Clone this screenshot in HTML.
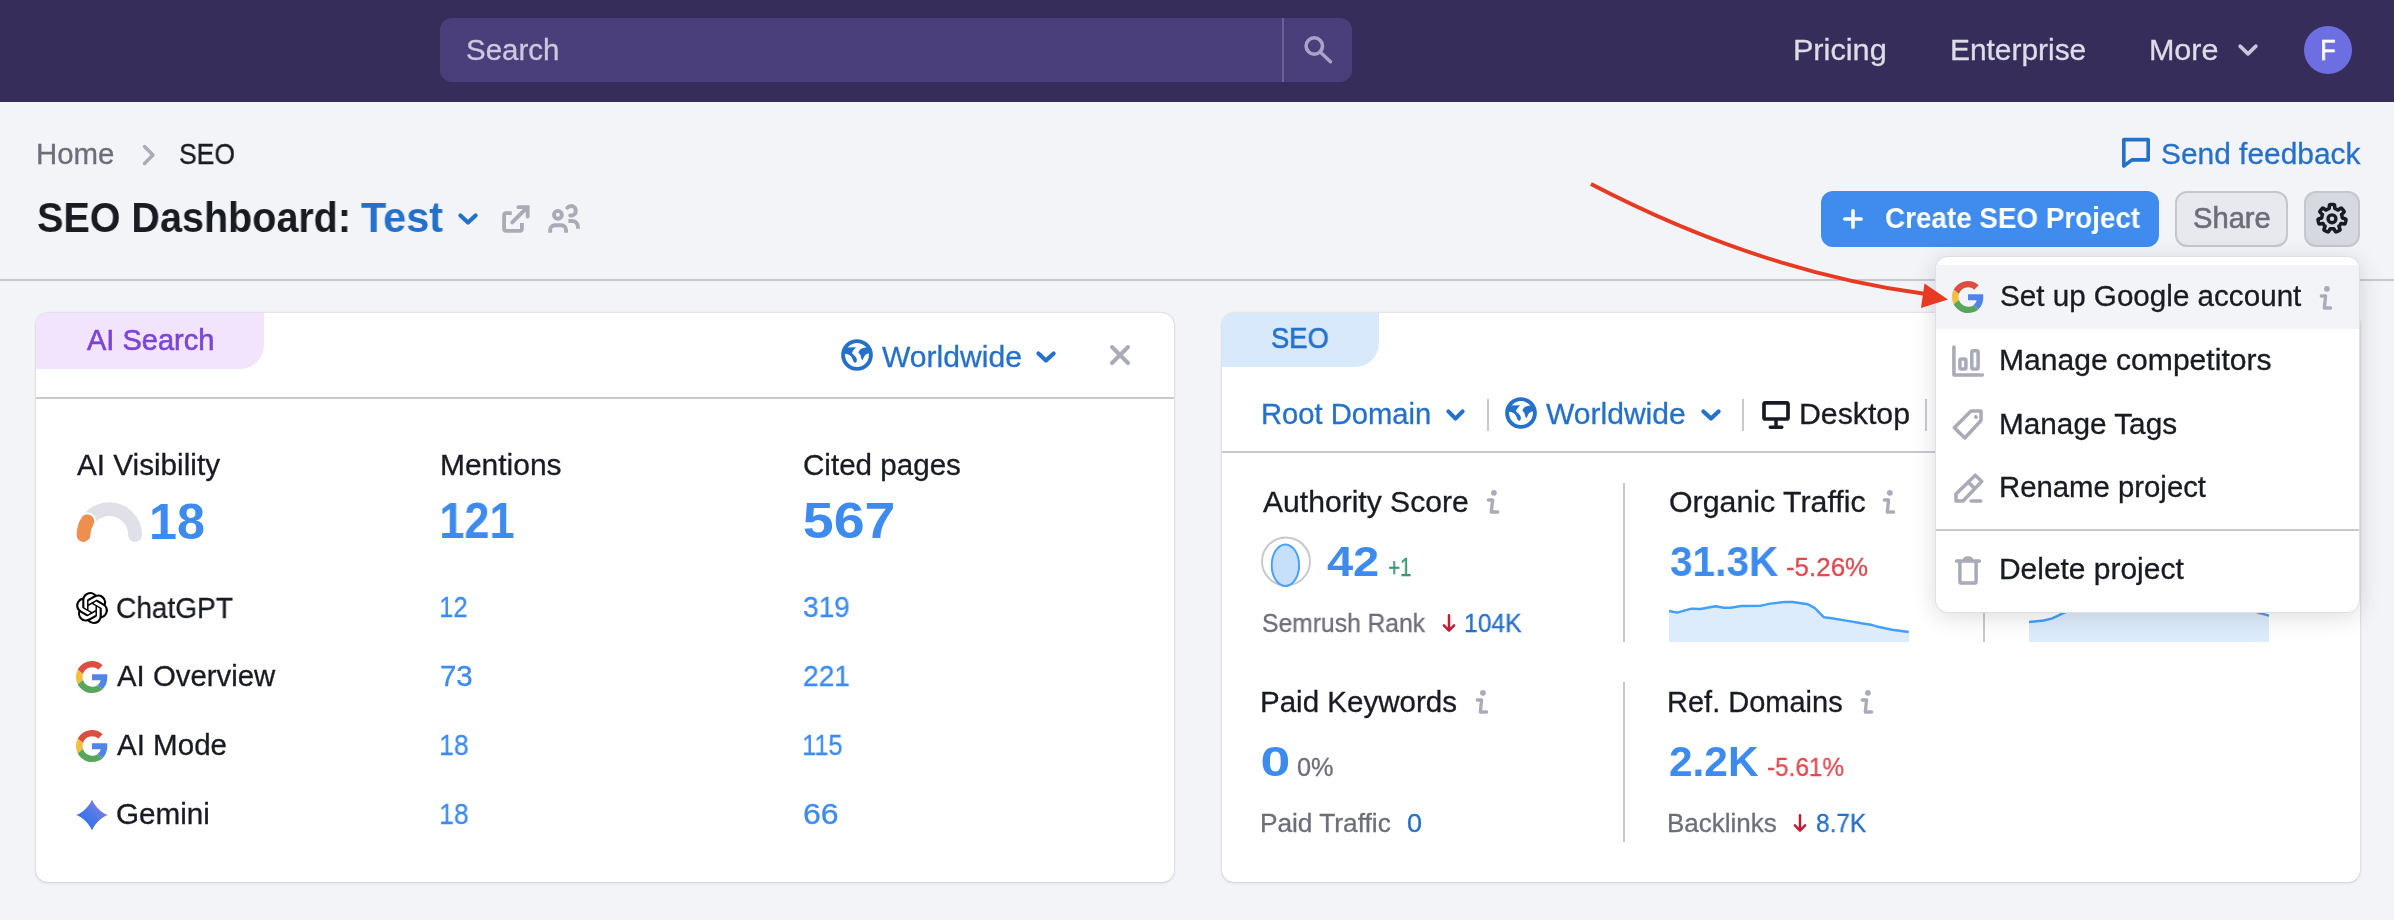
<!DOCTYPE html>
<html><head><meta charset="utf-8"><style>
html,body{margin:0;padding:0}
body{width:2394px;height:920px;overflow:hidden;position:relative;background:#f3f4f8;font-family:'Liberation Sans', sans-serif}
.t{position:absolute;line-height:1;white-space:nowrap;will-change:transform}
.a{position:absolute}
svg{overflow:visible}
</style></head><body>
<!-- header -->
<div class="a" style="left:0;top:0;width:2394px;height:102px;background:#362d5a"></div>
<div class="a" style="left:440px;top:18px;width:912px;height:64px;border-radius:12px;background:#4a3f7b"></div>
<div class="a" style="left:1282px;top:18px;width:2px;height:64px;background:#6a6197"></div>
<svg style="position:absolute;left:1300px;top:32px" width="36" height="36" viewBox="0 0 36 36">
<circle cx="14.3" cy="14" r="8.2" fill="none" stroke="#aaa3c9" stroke-width="3.6"/>
<line x1="20.5" y1="20.2" x2="30.5" y2="29.8" stroke="#aaa3c9" stroke-width="3.4" stroke-linecap="round"/></svg>
<svg style="position:absolute;left:2238px;top:44px" width="20" height="12" viewBox="0 0 20 12"><polyline points="2.1,2.1 10.0,9.899999999999999 17.9,2.1" fill="none" stroke="#c9c6d8" stroke-width="3.6" stroke-linecap="round" stroke-linejoin="round"/></svg>
<div class="a" style="left:2304px;top:26px;width:48px;height:48px;border-radius:50%;background:#6d6ee2"></div>

<!-- breadcrumb -->
<svg style="position:absolute;left:140px;top:142px" width="18" height="26" viewBox="0 0 18 26">
<polyline points="4.5,4.5 13,13 4.5,21.5" fill="none" stroke="#a9abb6" stroke-width="3.4" stroke-linecap="round" stroke-linejoin="round"/></svg>

<!-- feedback icon -->
<svg style="position:absolute;left:2121px;top:137px" width="32" height="32" viewBox="0 0 32 32">
<path d="M2.8 2.6 H27.2 V22.9 H11 L2.8 29 Z" fill="none" stroke="#2570c9" stroke-width="3.6" stroke-linejoin="round"/></svg>

<!-- title icons -->
<svg style="position:absolute;left:458px;top:213px" width="20" height="12" viewBox="0 0 20 12"><polyline points="2.4,2.4 10.0,9.6 17.599999999999998,2.4" fill="none" stroke="#2570c9" stroke-width="4.2" stroke-linecap="round" stroke-linejoin="round"/></svg>
<svg style="position:absolute;left:500px;top:203px" width="32" height="32" viewBox="0 0 32 32">
<path d="M11.8 10.1 H6.2 Q4.1 10.1 4.1 12.2 V25.7 Q4.1 27.8 6.2 27.8 H19.8 Q21.9 27.8 21.9 25.7 V20.1" fill="none" stroke="#a9abb6" stroke-width="3.8"/>
<path d="M12.2 19.4 L26.5 5.1 M18.4 4.2 H27.7 V13.5" fill="none" stroke="#a9abb6" stroke-width="3.8" stroke-linecap="round" stroke-linejoin="miter"/></svg>
<svg style="position:absolute;left:546px;top:203px" width="36" height="32" viewBox="0 0 36 32">
<circle cx="11.9" cy="11.8" r="3.95" fill="none" stroke="#a9abb6" stroke-width="3.9"/>
<path d="M4.15 29.7 V27 C4.15 24.2 6.2 22.25 9 22.25 H15.2 C18 22.25 20.05 24.2 20.05 27 V29.7" fill="none" stroke="#a9abb6" stroke-width="3.9"/>
<path d="M21.3 4.8 C22.3 3.6 23.8 3 25.3 3 C27.8 3 29.8 5.2 29.8 7.9 C29.8 10.5 27.7 12.5 25.2 12.5 H24.2" fill="none" stroke="#a9abb6" stroke-width="3.9" stroke-linecap="round"/>
<path d="M22.4 18 H26 C29.5 18 32 20.8 32 24.3 V25.8" fill="none" stroke="#a9abb6" stroke-width="3.9" stroke-linecap="butt"/></svg>

<!-- buttons -->
<div class="a" style="left:1821px;top:191px;width:338px;height:56px;border-radius:12px;background:#3f8bee"></div>
<svg style="position:absolute;left:1840px;top:206px" width="26" height="26" viewBox="0 0 26 26">
<path d="M13 4.8 V21.2 M4.8 13 H21.2" stroke="#fff" stroke-width="3.6" stroke-linecap="round"/></svg>
<div class="a" style="left:2175px;top:191px;width:109px;height:52px;border-radius:12px;background:#e8e9ee;border:2px solid #c5c6ce"></div>
<div class="a" style="left:2304px;top:191px;width:52px;height:52px;border-radius:12px;background:#d7d9e0;border:2px solid #c5c6ce"></div>
<svg style="position:absolute;left:2316px;top:202px" width="32" height="32" viewBox="0 0 32 32">
<path d="M28.15 16.50 L29.45 16.90 L29.97 17.34 L29.94 17.75 L29.90 18.17 L29.84 18.59 L29.78 19.00 L29.69 19.41 L29.60 19.82 L29.50 20.22 L29.38 20.63 L29.25 21.02 L29.11 21.42 L28.95 21.81 L28.29 21.97 L26.95 21.77 L25.62 21.49 L25.00 21.52 L24.84 21.78 L24.68 22.05 L24.51 22.30 L24.33 22.55 L24.15 22.80 L23.96 23.04 L23.76 23.28 L23.55 23.51 L23.34 23.73 L23.12 23.94 L22.89 24.15 L23.01 24.77 L23.58 26.00 L24.07 27.27 L24.06 27.95 L23.71 28.18 L23.36 28.41 L23.00 28.62 L22.63 28.83 L22.26 29.02 L21.89 29.20 L21.50 29.37 L21.11 29.53 L20.72 29.68 L20.33 29.81 L19.93 29.94 L19.39 29.52 L18.70 28.35 L18.10 27.14 L17.69 26.66 L17.38 26.71 L17.08 26.74 L16.77 26.77 L16.46 26.79 L16.15 26.80 L15.85 26.80 L15.54 26.79 L15.23 26.77 L14.92 26.74 L14.62 26.71 L14.31 26.66 L13.90 27.14 L13.30 28.35 L12.61 29.52 L12.07 29.94 L11.67 29.81 L11.28 29.68 L10.89 29.53 L10.50 29.37 L10.11 29.20 L9.74 29.02 L9.37 28.83 L9.00 28.62 L8.64 28.41 L8.29 28.18 L7.94 27.95 L7.93 27.27 L8.42 26.00 L8.99 24.77 L9.11 24.15 L8.88 23.94 L8.66 23.73 L8.45 23.51 L8.24 23.28 L8.04 23.04 L7.85 22.80 L7.67 22.55 L7.49 22.30 L7.32 22.05 L7.16 21.78 L7.00 21.52 L6.38 21.49 L5.05 21.77 L3.71 21.97 L3.05 21.81 L2.89 21.42 L2.75 21.02 L2.62 20.63 L2.50 20.22 L2.40 19.82 L2.31 19.41 L2.22 19.00 L2.16 18.59 L2.10 18.17 L2.06 17.75 L2.03 17.34 L2.55 16.90 L3.85 16.50 L5.16 16.18 L5.72 15.88 L5.74 15.58 L5.77 15.27 L5.82 14.96 L5.87 14.66 L5.93 14.36 L5.99 14.06 L6.07 13.76 L6.16 13.46 L6.25 13.17 L6.36 12.88 L6.47 12.59 L6.10 12.09 L5.05 11.23 L4.06 10.30 L3.77 9.68 L3.98 9.32 L4.20 8.96 L4.43 8.61 L4.67 8.27 L4.93 7.94 L5.19 7.61 L5.46 7.29 L5.74 6.98 L6.03 6.67 L6.33 6.38 L6.63 6.10 L7.30 6.23 L8.42 7.00 L9.50 7.82 L10.07 8.08 L10.33 7.90 L10.59 7.74 L10.85 7.58 L11.12 7.43 L11.39 7.29 L11.67 7.15 L11.95 7.03 L12.24 6.91 L12.53 6.80 L12.82 6.70 L13.11 6.61 L13.27 6.01 L13.30 4.65 L13.40 3.30 L13.71 2.69 L14.12 2.63 L14.54 2.58 L14.95 2.54 L15.37 2.51 L15.79 2.50 L16.21 2.50 L16.63 2.51 L17.05 2.54 L17.46 2.58 L17.88 2.63 L18.29 2.69 L18.60 3.30 L18.70 4.65 L18.73 6.01 L18.89 6.61 L19.18 6.70 L19.47 6.80 L19.76 6.91 L20.05 7.03 L20.33 7.15 L20.61 7.29 L20.88 7.43 L21.15 7.58 L21.41 7.74 L21.67 7.90 L21.93 8.08 L22.50 7.82 L23.58 7.00 L24.70 6.23 L25.37 6.10 L25.67 6.38 L25.97 6.67 L26.26 6.98 L26.54 7.29 L26.81 7.61 L27.07 7.94 L27.33 8.27 L27.57 8.61 L27.80 8.96 L28.02 9.32 L28.23 9.68 L27.94 10.30 L26.95 11.23 L25.90 12.09 L25.53 12.59 L25.64 12.88 L25.75 13.17 L25.84 13.46 L25.93 13.76 L26.01 14.06 L26.07 14.36 L26.13 14.66 L26.18 14.96 L26.23 15.27 L26.26 15.58 L26.28 15.88 L26.84 16.18 Z" fill="none" stroke="#191b23" stroke-width="3.5" stroke-linejoin="round"/>
<circle cx="16" cy="16.8" r="3.9" fill="none" stroke="#191b23" stroke-width="3.4"/></svg>

<!-- divider line -->
<div class="a" style="left:0;top:279px;width:2394px;height:2px;background:#c8c9d0"></div>

<!-- AI card -->
<div class="a" style="left:36px;top:313px;width:1138px;height:569px;border-radius:12px;background:#fff;box-shadow:0 0 2px rgba(25,27,35,0.28),0 2px 3px rgba(25,27,35,0.06)"></div>
<div class="a" style="left:36px;top:313px;width:228px;height:56px;border-radius:12px 0 24px 0;background:#f2e4fd"></div>
<div class="a" style="left:36px;top:397px;width:1138px;height:2px;background:#c8c9d0"></div>
<svg style="position:absolute;left:841px;top:339px" width="32" height="32" viewBox="0 0 32 32">
<path d="M4 8.6 L15.1 8.3 C13.5 10 11.2 12.5 11 14.3 C12.5 15.8 15.2 17.3 15.8 20.2 C16.2 22.3 15.2 23.8 14.2 23.8 C13.2 23.8 12.6 22.8 12.2 21.8 C11.5 19.8 10.6 17.5 8.7 16.3 C7.5 15.2 5.5 14.8 3.8 14.7 Z" fill="#2570c9"/>
<path d="M17.4 13.4 C18.2 11.5 19.4 10.2 20.8 9.6 C22 9 23.5 8.5 28 8.2 L28.2 14.3 C26.8 14.6 25 15.3 24.2 16.1 C23 17.5 22.2 20.2 21.5 20.9 C20.8 20.9 20.3 19.8 20.1 18.8 C19.9 17.5 19.7 16.5 19.3 15.8 C18.8 15 18 14.3 17.4 13.4 Z" fill="#2570c9"/>
<circle cx="16" cy="16" r="13.9" fill="none" stroke="#2570c9" stroke-width="3.9"/>
</svg>
<svg style="position:absolute;left:1036px;top:351px" width="20" height="12" viewBox="0 0 20 12"><polyline points="2.4,2.4 10.0,9.6 17.599999999999998,2.4" fill="none" stroke="#2570c9" stroke-width="4.2" stroke-linecap="round" stroke-linejoin="round"/></svg>
<svg style="position:absolute;left:1107px;top:342px" width="26" height="26" viewBox="0 0 26 26">
<path d="M5 5 L21 21 M21 5 L5 21" stroke="#a9abb6" stroke-width="4" stroke-linecap="round"/></svg>

<!-- gauge -->
<svg style="position:absolute;left:70px;top:495px" width="80" height="52" viewBox="70 495 80 52">
<path d="M 83.5 535 A 25.8 25.8 0 0 1 135.1 535" fill="none" stroke="#e0e1e8" stroke-width="13.8" stroke-linecap="round"/>
<path d="M 83.5 535 A 25.8 25.8 0 0 1 87.4 521.3" fill="none" stroke="#fff" stroke-width="17.8" stroke-linecap="round"/>
<path d="M 83.5 535 A 25.8 25.8 0 0 1 87.4 521.3" fill="none" stroke="#ef8f4f" stroke-width="13.8" stroke-linecap="round"/>
</svg>

<!-- icons rows -->
<svg style="position:absolute;left:76px;top:592px" width="32" height="32" viewBox="0 0 24 24">
<path fill="#000" d="M22.2819 9.8211a5.9847 5.9847 0 0 0-.5157-4.9108 6.0462 6.0462 0 0 0-6.5098-2.9A6.0651 6.0651 0 0 0 4.9807 4.1818a5.9847 5.9847 0 0 0-3.9977 2.9 6.0462 6.0462 0 0 0 .7427 7.0966 5.98 5.98 0 0 0 .511 4.9107 6.051 6.051 0 0 0 6.5146 2.9001A5.9847 5.9847 0 0 0 13.2599 24a6.0557 6.0557 0 0 0 5.7718-4.2058 5.9894 5.9894 0 0 0 3.9977-2.9001 6.0557 6.0557 0 0 0-.7475-7.0729zm-9.022 12.6081a4.4755 4.4755 0 0 1-2.8764-1.0408l.1419-.0804 4.7783-2.7582a.7948.7948 0 0 0 .3927-.6813v-6.7369l2.02 1.1686a.071.071 0 0 1 .038.052v5.5826a4.504 4.504 0 0 1-4.4945 4.4944zm-9.6607-4.1254a4.4708 4.4708 0 0 1-.5346-3.0137l.142.0852 4.783 2.7582a.7712.7712 0 0 0 .7806 0l5.8428-3.3685v2.3324a.0804.0804 0 0 1-.0332.0615L9.74 19.9502a4.4992 4.4992 0 0 1-6.1408-1.6464zM2.3408 7.8956a4.485 4.485 0 0 1 2.3655-1.9728V11.6a.7664.7664 0 0 0 .3879.6765l5.8144 3.3543-2.0201 1.1685a.0757.0757 0 0 1-.071 0l-4.8303-2.7865A4.504 4.504 0 0 1 2.3408 7.872zm16.5963 3.8558L13.1038 8.364 15.1192 7.2a.0757.0757 0 0 1 .071 0l4.8303 2.7913a4.4944 4.4944 0 0 1-.6765 8.1042v-5.6772a.79.79 0 0 0-.407-.667zm2.0107-3.0231l-.142-.0852-4.7735-2.7818a.7759.7759 0 0 0-.7854 0L9.409 9.2297V6.8974a.0662.0662 0 0 1 .0284-.0615l4.8303-2.7866a4.4992 4.4992 0 0 1 6.6802 4.66zM8.3065 12.863l-2.02-1.1638a.0804.0804 0 0 1-.038-.0567V6.0742a4.4992 4.4992 0 0 1 7.3757-3.4537l-.142.0805L8.704 5.459a.7948.7948 0 0 0-.3927.6813zm1.0976-2.3654l2.602-1.4998 2.6069 1.4998v2.9994l-2.5974 1.4997-2.6067-1.4997Z"/></svg>
<svg style="position:absolute;left:76px;top:661px" width="32" height="32" viewBox="0 0 48 48">
<path fill="#dc4e3f" d="M24 9.5c3.54 0 6.71 1.22 9.21 3.6l6.85-6.85C35.9 2.38 30.47 0 24 0 14.62 0 6.51 5.38 2.56 13.22l7.98 6.19C12.43 13.72 17.74 9.5 24 9.5z"/>
<path fill="#4f84ea" d="M46.98 24.55c0-1.57-.15-3.09-.38-4.55H24v9.02h12.94c-.58 2.96-2.26 5.48-4.78 7.18l7.73 6c4.51-4.18 7.09-10.36 7.09-17.650z"/>
<path fill="#f1c03f" d="M10.53 28.59c-.48-1.45-.76-2.990-.76-4.59s.27-3.14.76-4.59l-7.98-6.19C.92 16.46 0 20.12 0 24c0 3.88.92 7.54 2.56 10.78l7.97-6.19z"/>
<path fill="#58a65c" d="M24 48c6.48 0 11.93-2.13 15.890-5.81l-7.73-6c-2.15 1.45-4.92 2.3-8.16 2.3-6.26 0-11.57-4.22-13.47-9.91l-7.98 6.19C6.51 42.62 14.62 48 24 48z"/>
</svg>
<svg style="position:absolute;left:76px;top:730px" width="32" height="32" viewBox="0 0 48 48">
<path fill="#dc4e3f" d="M24 9.5c3.54 0 6.71 1.22 9.21 3.6l6.85-6.85C35.9 2.38 30.47 0 24 0 14.62 0 6.51 5.38 2.56 13.22l7.98 6.19C12.43 13.72 17.74 9.5 24 9.5z"/>
<path fill="#4f84ea" d="M46.98 24.55c0-1.57-.15-3.09-.38-4.55H24v9.02h12.94c-.58 2.96-2.26 5.48-4.78 7.18l7.73 6c4.51-4.18 7.09-10.36 7.09-17.650z"/>
<path fill="#f1c03f" d="M10.53 28.59c-.48-1.45-.76-2.990-.76-4.59s.27-3.14.76-4.59l-7.98-6.19C.92 16.46 0 20.12 0 24c0 3.88.92 7.54 2.56 10.78l7.97-6.19z"/>
<path fill="#58a65c" d="M24 48c6.48 0 11.93-2.13 15.890-5.81l-7.73-6c-2.15 1.45-4.92 2.3-8.16 2.3-6.26 0-11.57-4.22-13.47-9.91l-7.98 6.19C6.51 42.62 14.62 48 24 48z"/>
</svg>
<svg style="position:absolute;left:76px;top:799px" width="32" height="32" viewBox="0 0 32 32">
<defs><linearGradient id="gm" x1="0" y1="1" x2="1" y2="0"><stop offset="0" stop-color="#1f6cf0"/><stop offset="0.5" stop-color="#4d7ae6"/><stop offset="1" stop-color="#a17ce0"/></linearGradient></defs>
<path d="M16 0.5 C18.5 7 25 13.5 31.8 16 C25 18.5 18.5 25 16 31.5 C13.5 25 7 18.5 0.2 16 C7 13.5 13.5 7 16 0.5 Z" fill="url(#gm)"/></svg>

<!-- SEO card -->
<div class="a" style="left:1222px;top:313px;width:1138px;height:569px;border-radius:12px;background:#fff;box-shadow:0 0 2px rgba(25,27,35,0.28),0 2px 3px rgba(25,27,35,0.06)"></div>
<div class="a" style="left:1222px;top:313px;width:157px;height:54px;border-radius:12px 0 24px 0;background:#d9e9fc"></div>
<div class="a" style="left:1222px;top:451px;width:1138px;height:2px;background:#c8c9d0"></div>
<svg style="position:absolute;left:1446px;top:409px" width="19" height="12" viewBox="0 0 19 12"><polyline points="2.4,2.4 9.5,9.6 16.599999999999998,2.4" fill="none" stroke="#2570c9" stroke-width="4.2" stroke-linecap="round" stroke-linejoin="round"/></svg>
<div class="a" style="left:1487px;top:399px;width:2px;height:32px;background:#c8c9d0"></div>
<svg style="position:absolute;left:1505px;top:397px" width="32" height="32" viewBox="0 0 32 32">
<path d="M4 8.6 L15.1 8.3 C13.5 10 11.2 12.5 11 14.3 C12.5 15.8 15.2 17.3 15.8 20.2 C16.2 22.3 15.2 23.8 14.2 23.8 C13.2 23.8 12.6 22.8 12.2 21.8 C11.5 19.8 10.6 17.5 8.7 16.3 C7.5 15.2 5.5 14.8 3.8 14.7 Z" fill="#2570c9"/>
<path d="M17.4 13.4 C18.2 11.5 19.4 10.2 20.8 9.6 C22 9 23.5 8.5 28 8.2 L28.2 14.3 C26.8 14.6 25 15.3 24.2 16.1 C23 17.5 22.2 20.2 21.5 20.9 C20.8 20.9 20.3 19.8 20.1 18.8 C19.9 17.5 19.7 16.5 19.3 15.8 C18.8 15 18 14.3 17.4 13.4 Z" fill="#2570c9"/>
<circle cx="16" cy="16" r="13.9" fill="none" stroke="#2570c9" stroke-width="3.9"/>
</svg>
<svg style="position:absolute;left:1701px;top:409px" width="20" height="12" viewBox="0 0 20 12"><polyline points="2.4,2.4 10.0,9.6 17.599999999999998,2.4" fill="none" stroke="#2570c9" stroke-width="4.2" stroke-linecap="round" stroke-linejoin="round"/></svg>
<div class="a" style="left:1742px;top:399px;width:2px;height:32px;background:#c8c9d0"></div>
<svg style="position:absolute;left:1752px;top:390px" width="48" height="48" viewBox="0 0 48 48">
<rect x="12" y="12.8" width="24" height="16.2" rx="1.5" fill="none" stroke="#191b23" stroke-width="3.7"/>
<path d="M24 31 V35.5 M18.3 37.2 H29.8" stroke="#191b23" stroke-width="3.5" stroke-linecap="round"/></svg>
<div class="a" style="left:1925px;top:399px;width:2px;height:32px;background:#c8c9d0"></div>

<svg style="position:absolute;left:1480px;top:489px" width="24" height="26" viewBox="0 0 24 26">
<circle cx="13.9" cy="3.8" r="2.9" fill="#a9abb6"/>
<path d="M8.3 11 H12.6 L11.3 23 H17.6" fill="none" stroke="#a9abb6" stroke-width="3.3" stroke-linecap="round" stroke-linejoin="round"/></svg>
<svg style="position:absolute;left:1876px;top:489px" width="24" height="26" viewBox="0 0 24 26">
<circle cx="13.9" cy="3.8" r="2.9" fill="#a9abb6"/>
<path d="M8.3 11 H12.6 L11.3 23 H17.6" fill="none" stroke="#a9abb6" stroke-width="3.3" stroke-linecap="round" stroke-linejoin="round"/></svg>
<svg style="position:absolute;left:1469px;top:689px" width="24" height="26" viewBox="0 0 24 26">
<circle cx="13.9" cy="3.8" r="2.9" fill="#a9abb6"/>
<path d="M8.3 11 H12.6 L11.3 23 H17.6" fill="none" stroke="#a9abb6" stroke-width="3.3" stroke-linecap="round" stroke-linejoin="round"/></svg>
<svg style="position:absolute;left:1854px;top:689px" width="24" height="26" viewBox="0 0 24 26">
<circle cx="13.9" cy="3.8" r="2.9" fill="#a9abb6"/>
<path d="M8.3 11 H12.6 L11.3 23 H17.6" fill="none" stroke="#a9abb6" stroke-width="3.3" stroke-linecap="round" stroke-linejoin="round"/></svg>
<div class="a" style="left:1623px;top:483px;width:2px;height:159px;background:#c8c9d0"></div>
<div class="a" style="left:1983px;top:483px;width:2px;height:159px;background:#c8c9d0"></div>
<div class="a" style="left:1623px;top:682px;width:2px;height:160px;background:#c8c9d0"></div>

<svg style="position:absolute;left:1260px;top:535px" width="54" height="54" viewBox="1260 535 54 54">
<circle cx="1286" cy="561.4" r="24" fill="none" stroke="#c8c9d0" stroke-width="2"/>
<ellipse cx="1285.4" cy="565.2" rx="13.7" ry="20.8" fill="#c6e0fb" stroke="#4aa2f6" stroke-width="2"/></svg>
<svg style="position:absolute;left:1669px;top:596px" width="241" height="47" viewBox="0 0 241 47">
<polygon points="0,46 0.0,15.0 7.9,16.7 22.5,12.7 31.3,13.0 46.5,10.3 54.7,11.7 61.7,11.7 72.2,10.0 92.1,9.7 101.5,7.6 116.7,5.9 123.7,6.0 138.9,8.3 145.9,12.1 154.7,21.2 161.1,22.0 178.7,24.9 193.9,27.5 202.0,28.7 209.0,30.8 223.1,33.7 239.8,36.0 240,46" fill="#ddecfc"/><polyline points="0.0,15.0 7.9,16.7 22.5,12.7 31.3,13.0 46.5,10.3 54.7,11.7 61.7,11.7 72.2,10.0 92.1,9.7 101.5,7.6 116.7,5.9 123.7,6.0 138.9,8.3 145.9,12.1 154.7,21.2 161.1,22.0 178.7,24.9 193.9,27.5 202.0,28.7 209.0,30.8 223.1,33.7 239.8,36.0" fill="none" stroke="#42a0f6" stroke-width="2.4" stroke-linejoin="round" stroke-linecap="butt"/></svg>
<svg style="position:absolute;left:2029px;top:596px" width="241" height="47" viewBox="0 0 241 47">
<polygon points="0,46 0.0,26.0 14.8,24.5 23.3,22.4 35.4,16.7 51.0,10.0 91.0,6.0 151.0,4.0 211.0,10.0 230.7,17.0 240.0,19.6 240,46" fill="#ddecfc"/><polyline points="0.0,26.0 14.8,24.5 23.3,22.4 35.4,16.7 51.0,10.0 91.0,6.0 151.0,4.0 211.0,10.0 230.7,17.0 240.0,19.6" fill="none" stroke="#42a0f6" stroke-width="2.4" stroke-linejoin="round" stroke-linecap="butt"/></svg>

<!-- red arrows small -->
<svg style="position:absolute;left:1440px;top:612px" width="18" height="22" viewBox="0 0 18 22">
<path d="M9 3.2 V18.5 M3.9 13.3 L9 18.6 L14.1 13.3" fill="none" stroke="#c41c35" stroke-width="2.5" stroke-linecap="round" stroke-linejoin="round"/></svg>
<svg style="position:absolute;left:1791px;top:812px" width="18" height="22" viewBox="0 0 18 22">
<path d="M9 3.2 V18.5 M3.9 13.3 L9 18.6 L14.1 13.3" fill="none" stroke="#c41c35" stroke-width="2.5" stroke-linecap="round" stroke-linejoin="round"/></svg>

<!-- dropdown menu -->
<div class="a" style="left:1936px;top:257px;width:423px;height:355px;border-radius:12px;background:#fff;box-shadow:0 0 0 1px #dfe0e6,0 4px 24px rgba(25,27,35,0.16)"></div>
<div class="a" style="left:1936px;top:265px;width:423px;height:64px;background:#f3f4f8"></div>
<div class="a" style="left:1936px;top:529px;width:423px;height:2px;background:#c8c9d0"></div>
<svg style="position:absolute;left:1952px;top:281px" width="32" height="32" viewBox="0 0 48 48">
<path fill="#dc4e3f" d="M24 9.5c3.54 0 6.71 1.22 9.21 3.6l6.85-6.85C35.9 2.38 30.47 0 24 0 14.62 0 6.51 5.38 2.56 13.22l7.98 6.19C12.43 13.72 17.74 9.5 24 9.5z"/>
<path fill="#4f84ea" d="M46.98 24.55c0-1.57-.15-3.09-.38-4.55H24v9.02h12.94c-.58 2.96-2.26 5.48-4.78 7.18l7.73 6c4.51-4.18 7.09-10.36 7.09-17.650z"/>
<path fill="#f1c03f" d="M10.53 28.59c-.48-1.45-.76-2.990-.76-4.59s.27-3.14.76-4.59l-7.98-6.19C.92 16.46 0 20.12 0 24c0 3.88.92 7.54 2.56 10.78l7.97-6.19z"/>
<path fill="#58a65c" d="M24 48c6.48 0 11.93-2.13 15.890-5.81l-7.73-6c-2.15 1.45-4.92 2.3-8.16 2.3-6.26 0-11.57-4.22-13.47-9.91l-7.98 6.19C6.51 42.62 14.62 48 24 48z"/>
</svg>
<svg style="position:absolute;left:2308px;top:285px" width="24" height="26" viewBox="0 0 24 26">
<circle cx="18.9" cy="3.8" r="2.9" fill="#a9abb6"/>
<path d="M13.3 11 H17.6 L16.3 23 H22.6" fill="none" stroke="#a9abb6" stroke-width="3.3" stroke-linecap="round" stroke-linejoin="round"/></svg>
<svg style="position:absolute;left:1944px;top:336px" width="48" height="48" viewBox="0 0 48 48">
<path d="M9.9 11 V38.9 H38.3" fill="none" stroke="#a9abb6" stroke-width="3.5" stroke-linecap="round" stroke-linejoin="round"/>
<rect x="15.9" y="22.9" width="6" height="10" rx="1.5" fill="none" stroke="#a9abb6" stroke-width="3.5"/>
<rect x="27.8" y="14.8" width="6.3" height="18.1" rx="1.5" fill="none" stroke="#a9abb6" stroke-width="3.5"/></svg>
<svg style="position:absolute;left:1944px;top:400px" width="48" height="48" viewBox="0 0 48 48">
<path d="M27 11 H37 V20.5 L20.8 38 L10.3 27.7 Z" fill="none" stroke="#a9abb6" stroke-width="3.5" stroke-linejoin="round"/>
<circle cx="31.9" cy="17" r="1.9" fill="#a9abb6"/></svg>
<svg style="position:absolute;left:1944px;top:464px" width="48" height="48" viewBox="0 0 48 48">
<path d="M12 37 V30 L31.3 11.2 L37.8 17.4 L19 37 Z M24.3 18.2 L30.8 24.5" fill="none" stroke="#a9abb6" stroke-width="3.5" stroke-linejoin="round"/>
<path d="M27.1 37 H36.8" stroke="#a9abb6" stroke-width="3.5" stroke-linecap="round"/></svg>
<svg style="position:absolute;left:1944px;top:546px" width="48" height="48" viewBox="0 0 48 48">
<path d="M12.5 14.9 H35.5 M20.5 14 C20.5 11.2 27.5 11.2 27.5 14" fill="none" stroke="#a9abb6" stroke-width="3.5" stroke-linecap="round"/>
<path d="M15.9 15 V35.5 Q15.9 37.1 17.5 37.1 H30.5 Q32.1 37.1 32.1 35.5 V15" fill="none" stroke="#a9abb6" stroke-width="3.5"/></svg>

<!-- red annotation arrow -->
<svg style="position:absolute;left:0;top:0" width="2394" height="920" viewBox="0 0 2394 920">
<path d="M1591 184 Q1760 272 1926 294" fill="none" stroke="#e63a22" stroke-width="3.8"/>
<path d="M1948 299.5 L1924.5 283.5 L1921 308 Z" fill="#e63a22"/></svg>

<div class="t" style="left:466.00px;top:36.40px;font-size:29px;font-weight:400;color:#cdc8df;transform:scaleX(1.0169);transform-origin:1px 0;-webkit-text-stroke:0.3px #cdc8df">Search</div>
<div class="t" style="left:1793.00px;top:36.00px;font-size:29px;font-weight:400;color:#dddce7;transform:scaleX(1.0588);transform-origin:2px 0;-webkit-text-stroke:0.3px #dddce7">Pricing</div>
<div class="t" style="left:1950.00px;top:36.00px;font-size:29px;font-weight:400;color:#dddce7;transform:scaleX(1.0310);transform-origin:2px 0;-webkit-text-stroke:0.3px #dddce7">Enterprise</div>
<div class="t" style="left:2148.60px;top:35.90px;font-size:29px;font-weight:400;color:#dddce7;transform:scaleX(1.0540);transform-origin:2px 0;-webkit-text-stroke:0.3px #dddce7">More</div>
<div class="t" style="left:2319.60px;top:35.90px;font-size:29px;font-weight:400;color:#ffffff;transform:scaleX(0.8733);transform-origin:2px 0;-webkit-text-stroke:0.6px #ffffff">F</div>
<div class="t" style="left:36.00px;top:140.00px;font-size:29px;font-weight:400;color:#6c6e79;transform:scaleX(1.0135);transform-origin:2px 0;-webkit-text-stroke:0.3px #6c6e79">Home</div>
<div class="t" style="left:179.00px;top:140.00px;font-size:29px;font-weight:400;color:#191b23;transform:scaleX(0.9119);transform-origin:1px 0;-webkit-text-stroke:0.3px #191b23">SEO</div>
<div class="t" style="left:2160.60px;top:140.00px;font-size:29px;font-weight:400;color:#2570c9;transform:scaleX(1.0307);transform-origin:1px 0;-webkit-text-stroke:0.3px #2570c9">Send feedback</div>
<div class="t" style="left:37.00px;top:197.00px;font-size:42px;font-weight:700;color:#191b23;transform:scaleX(0.9407);transform-origin:1px 0">SEO Dashboard:</div>
<div class="t" style="left:361.30px;top:197.00px;font-size:42px;font-weight:700;color:#2570c9;transform:scaleX(0.9843);transform-origin:0px 0">Test</div>
<div class="t" style="left:1884.60px;top:204.00px;font-size:29px;font-weight:700;color:#ffffff;transform:scaleX(0.9589);transform-origin:1px 0">Create SEO Project</div>
<div class="t" style="left:2192.60px;top:204.00px;font-size:29px;font-weight:400;color:#6c6e79;transform:scaleX(1.0053);transform-origin:1px 0;-webkit-text-stroke:0.6px #6c6e79">Share</div>
<div class="t" style="left:87.00px;top:326.20px;font-size:29px;font-weight:400;color:#7b45d6;-webkit-text-stroke:0.6px #7b45d6">AI Search</div>
<div class="t" style="left:882.00px;top:342.80px;font-size:29px;font-weight:400;color:#2570c9;transform:scaleX(1.0373);transform-origin:0px 0;-webkit-text-stroke:0.3px #2570c9">Worldwide</div>
<div class="t" style="left:77.10px;top:450.70px;font-size:29px;font-weight:400;color:#191b23;transform:scaleX(1.0236);transform-origin:0px 0;-webkit-text-stroke:0.3px #191b23">AI Visibility</div>
<div class="t" style="left:439.50px;top:451.00px;font-size:29px;font-weight:400;color:#191b23;transform:scaleX(1.0339);transform-origin:2px 0;-webkit-text-stroke:0.3px #191b23">Mentions</div>
<div class="t" style="left:803.30px;top:451.00px;font-size:29px;font-weight:400;color:#191b23;transform:scaleX(1.0203);transform-origin:1px 0;-webkit-text-stroke:0.3px #191b23">Cited pages</div>
<div class="t" style="left:149.00px;top:496.60px;font-size:50px;font-weight:700;color:#3d8bef;transform:scaleX(1.0059);transform-origin:3px 0">18</div>
<div class="t" style="left:438.50px;top:496.40px;font-size:50px;font-weight:700;color:#3d8bef;transform:scaleX(0.9038);transform-origin:3px 0">121</div>
<div class="t" style="left:802.80px;top:496.40px;font-size:50px;font-weight:700;color:#3d8bef;transform:scaleX(1.1101);transform-origin:2px 0">567</div>
<div class="t" style="left:116.00px;top:593.60px;font-size:29px;font-weight:400;color:#191b23;transform:scaleX(0.9667);transform-origin:1px 0;-webkit-text-stroke:0.3px #191b23">ChatGPT</div>
<div class="t" style="left:117.00px;top:662.00px;font-size:29px;font-weight:400;color:#191b23;transform:scaleX(1.0128);transform-origin:0px 0;-webkit-text-stroke:0.3px #191b23">AI Overview</div>
<div class="t" style="left:117.00px;top:731.00px;font-size:29px;font-weight:400;color:#191b23;transform:scaleX(1.0187);transform-origin:0px 0;-webkit-text-stroke:0.3px #191b23">AI Mode</div>
<div class="t" style="left:116.00px;top:800.00px;font-size:29px;font-weight:400;color:#191b23;transform:scaleX(1.0225);transform-origin:1px 0;-webkit-text-stroke:0.3px #191b23">Gemini</div>
<div class="t" style="left:438.60px;top:593.00px;font-size:29px;font-weight:400;color:#3d8bef;transform:scaleX(0.8759);transform-origin:2px 0;-webkit-text-stroke:0.3px #3d8bef">12</div>
<div class="t" style="left:802.50px;top:593.00px;font-size:29px;font-weight:400;color:#3d8bef;transform:scaleX(0.9652);transform-origin:1px 0;-webkit-text-stroke:0.3px #3d8bef">319</div>
<div class="t" style="left:439.60px;top:662.00px;font-size:29px;font-weight:400;color:#3d8bef;transform:scaleX(1.0133);transform-origin:1px 0;-webkit-text-stroke:0.3px #3d8bef">73</div>
<div class="t" style="left:802.50px;top:662.00px;font-size:29px;font-weight:400;color:#3d8bef;transform:scaleX(0.9674);transform-origin:1px 0;-webkit-text-stroke:0.3px #3d8bef">221</div>
<div class="t" style="left:438.60px;top:731.00px;font-size:29px;font-weight:400;color:#3d8bef;transform:scaleX(0.9103);transform-origin:2px 0;-webkit-text-stroke:0.3px #3d8bef">18</div>
<div class="t" style="left:801.50px;top:731.00px;font-size:29px;font-weight:400;color:#3d8bef;transform:scaleX(0.8721);transform-origin:2px 0;-webkit-text-stroke:0.3px #3d8bef">115</div>
<div class="t" style="left:438.60px;top:800.00px;font-size:29px;font-weight:400;color:#3d8bef;transform:scaleX(0.9103);transform-origin:2px 0;-webkit-text-stroke:0.3px #3d8bef">18</div>
<div class="t" style="left:802.50px;top:800.00px;font-size:29px;font-weight:400;color:#3d8bef;transform:scaleX(1.1033);transform-origin:1px 0;-webkit-text-stroke:0.3px #3d8bef">66</div>
<div class="t" style="left:1271.40px;top:324.30px;font-size:29px;font-weight:400;color:#2570c9;transform:scaleX(0.9424);transform-origin:1px 0;-webkit-text-stroke:0.6px #2570c9">SEO</div>
<div class="t" style="left:1261.00px;top:400.00px;font-size:29px;font-weight:400;color:#2570c9;transform:scaleX(1.0061);transform-origin:2px 0;-webkit-text-stroke:0.3px #2570c9">Root Domain</div>
<div class="t" style="left:1545.80px;top:400.00px;font-size:29px;font-weight:400;color:#2570c9;transform:scaleX(1.0358);transform-origin:0px 0;-webkit-text-stroke:0.3px #2570c9">Worldwide</div>
<div class="t" style="left:1799.00px;top:400.00px;font-size:29px;font-weight:400;color:#191b23;transform:scaleX(1.0447);transform-origin:2px 0;-webkit-text-stroke:0.3px #191b23">Desktop</div>
<div class="t" style="left:1263.00px;top:488.00px;font-size:29px;font-weight:400;color:#191b23;transform:scaleX(1.0376);transform-origin:0px 0;-webkit-text-stroke:0.3px #191b23">Authority Score</div>
<div class="t" style="left:1668.70px;top:488.00px;font-size:29px;font-weight:400;color:#191b23;transform:scaleX(1.0462);transform-origin:1px 0;-webkit-text-stroke:0.3px #191b23">Organic Traffic</div>
<div class="t" style="left:1326.60px;top:541.00px;font-size:42px;font-weight:700;color:#3d8bef;transform:scaleX(1.1205);transform-origin:1px 0">42</div>
<div class="t" style="left:1387.70px;top:555.00px;font-size:25px;font-weight:400;color:#3a9775;transform:scaleX(0.8192);transform-origin:1px 0;-webkit-text-stroke:0.3px #3a9775">+1</div>
<div class="t" style="left:1669.60px;top:541.00px;font-size:42px;font-weight:700;color:#3d8bef;transform:scaleX(0.9658);transform-origin:1px 0">31.3K</div>
<div class="t" style="left:1786.30px;top:555.00px;font-size:25px;font-weight:400;color:#e04a4f;transform:scaleX(1.0372);transform-origin:1px 0;-webkit-text-stroke:0.3px #e04a4f">-5.26%</div>
<div class="t" style="left:1262.30px;top:611.10px;font-size:25px;font-weight:400;color:#6c6e79;transform:scaleX(0.9860);transform-origin:1px 0;-webkit-text-stroke:0.3px #6c6e79">Semrush Rank</div>
<div class="t" style="left:1464.20px;top:611.10px;font-size:25px;font-weight:400;color:#2570c9;transform:scaleX(0.9857);transform-origin:2px 0;-webkit-text-stroke:0.3px #2570c9">104K</div>
<div class="t" style="left:1260.30px;top:688.20px;font-size:29px;font-weight:400;color:#191b23;transform:scaleX(1.0188);transform-origin:2px 0;-webkit-text-stroke:0.3px #191b23">Paid Keywords</div>
<div class="t" style="left:1261.30px;top:741.00px;font-size:42px;font-weight:700;color:#3d8bef;transform:scaleX(1.2750);transform-origin:2px 0">0</div>
<div class="t" style="left:1297.30px;top:755.00px;font-size:25px;font-weight:400;color:#6c6e79;transform:scaleX(1.0114);transform-origin:1px 0;-webkit-text-stroke:0.3px #6c6e79">0%</div>
<div class="t" style="left:1260.30px;top:811.00px;font-size:25px;font-weight:400;color:#6c6e79;transform:scaleX(1.0508);transform-origin:2px 0;-webkit-text-stroke:0.3px #6c6e79">Paid Traffic</div>
<div class="t" style="left:1407.00px;top:811.00px;font-size:25px;font-weight:400;color:#2570c9;transform:scaleX(1.0833);transform-origin:1px 0;-webkit-text-stroke:0.3px #2570c9">0</div>
<div class="t" style="left:1666.80px;top:688.20px;font-size:29px;font-weight:400;color:#191b23;-webkit-text-stroke:0.3px #191b23">Ref. Domains</div>
<div class="t" style="left:1668.80px;top:741.00px;font-size:42px;font-weight:700;color:#3d8bef;transform:scaleX(1.0092);transform-origin:1px 0">2.2K</div>
<div class="t" style="left:1766.60px;top:755.00px;font-size:25px;font-weight:400;color:#e04a4f;transform:scaleX(0.9718);transform-origin:1px 0;-webkit-text-stroke:0.3px #e04a4f">-5.61%</div>
<div class="t" style="left:1666.80px;top:811.00px;font-size:25px;font-weight:400;color:#6c6e79;transform:scaleX(1.0408);transform-origin:2px 0;-webkit-text-stroke:0.3px #6c6e79">Backlinks</div>
<div class="t" style="left:1816.00px;top:811.00px;font-size:25px;font-weight:400;color:#2570c9;transform:scaleX(0.9760);transform-origin:1px 0;-webkit-text-stroke:0.3px #2570c9">8.7K</div>
<div class="t" style="left:2000.20px;top:282.00px;font-size:29px;font-weight:400;color:#191b23;transform:scaleX(1.0214);transform-origin:1px 0;-webkit-text-stroke:0.3px #191b23">Set up Google account</div>
<div class="t" style="left:1999.20px;top:346.00px;font-size:29px;font-weight:400;color:#191b23;transform:scaleX(1.0377);transform-origin:2px 0;-webkit-text-stroke:0.3px #191b23">Manage competitors</div>
<div class="t" style="left:1999.20px;top:410.00px;font-size:29px;font-weight:400;color:#191b23;transform:scaleX(1.0263);transform-origin:2px 0;-webkit-text-stroke:0.3px #191b23">Manage Tags</div>
<div class="t" style="left:1999.20px;top:473.00px;font-size:29px;font-weight:400;color:#191b23;transform:scaleX(1.0113);transform-origin:2px 0;-webkit-text-stroke:0.3px #191b23">Rename project</div>
<div class="t" style="left:1999.20px;top:554.70px;font-size:29px;font-weight:400;color:#191b23;transform:scaleX(1.0328);transform-origin:2px 0;-webkit-text-stroke:0.3px #191b23">Delete project</div>
</body></html>
